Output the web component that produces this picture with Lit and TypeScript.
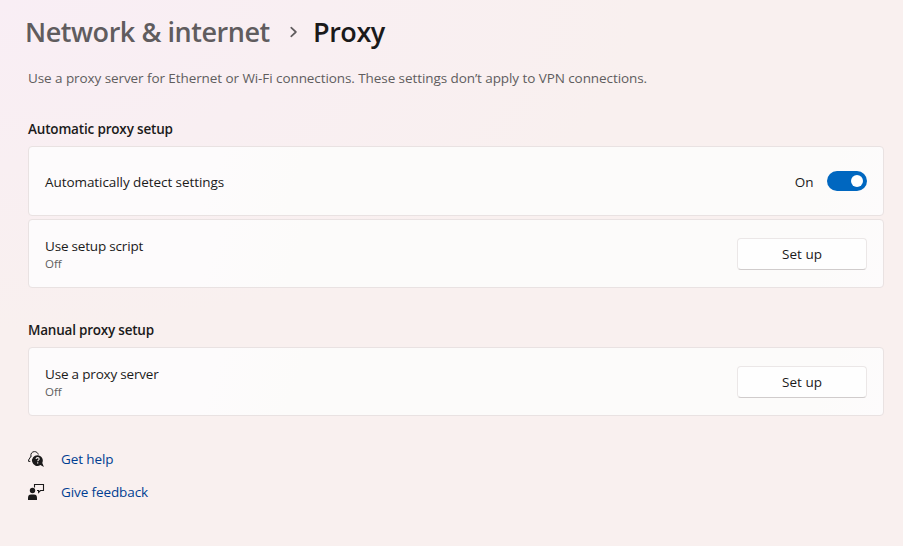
import { LitElement, html, css } from "lit";
import { customElement, property, state } from "lit/decorators.js";

const base = css`
  :host { display: block; box-sizing: border-box; font-family: "Open Sans", "Noto Sans", sans-serif; color: #1b1a1a; }
  * { box-sizing: border-box; margin: 0; }
`;

@customElement("toggle-switch")
class ToggleSwitch extends LitElement {
  static styles = [base, css`
    .wrap { display: flex; align-items: center; }
    .label { font-size: 13.5px; line-height: 20px; margin-right: 13.5px; padding-top: 2px; }
    .track { width: 40px; height: 20px; border-radius: 10px; border: 0; background: #0067c0; padding: 0 4px; display: flex; align-items: center; justify-content: flex-end; }
    .track.off { justify-content: flex-start; background: #8a8a8a; }
    .thumb { width: 12px; height: 12px; border-radius: 50%; background: #fff; }
  `];
  @state() on = true;
  render() {
    return html`<div class="wrap">
      <span class="label">${this.on ? "On" : "Off"}</span>
      <button class="track ${this.on ? "" : "off"}" @click=${() => (this.on = !this.on)}><span class="thumb"></span></button>
    </div>`;
  }
}

@customElement("setting-card")
class SettingCard extends LitElement {
  static styles = [base, css`
    .card { height: 69px; display: flex; align-items: center; justify-content: space-between; padding: 0 16px; border: 1px solid #e9e2e2; border-radius: 4px; background: linear-gradient(110deg, #fdfbfc 0%, #fdfbfc 22%, #fcfbfa 32%, #fcfbfa 92%, #fdfbfc 100%); }
    .card.tall { height: 70px; }
    .name { font-size: 13.5px; line-height: 20px; white-space: nowrap; padding-top: 1px; letter-spacing: -0.19px; }
    .tall .name { letter-spacing: -0.07px; }
    .note { font-size: 11.5px; line-height: 16px; color: #605e5e; letter-spacing: 0; font-variant-ligatures: none; }
  `];
  @property() name = "";
  @property() note = "";
  render() {
    return html`<div class="card ${this.note ? "" : "tall"}">
      <div>
        <div class="name">${this.name}</div>
        ${this.note ? html`<div class="note">${this.note}</div>` : ""}
      </div>
      <slot></slot>
    </div>`;
  }
}

@customElement("app-root")
class AppRoot extends LitElement {
  static styles = [base, css`
    :host { height: 546px; overflow: hidden; padding: 12px 19px 0 28px; background: radial-gradient(ellipse 640px 330px at 0 0, #f9eef5 0%, #f9eff2 50%, #f9f0ef 100%); }
    .crumbs { display: flex; align-items: center; height: 40px; margin-left: -3px; font-size: 27px; font-weight: 600; line-height: 40px; white-space: nowrap; letter-spacing: -0.45px; }
    .parent { color: #605c5e; width: 264px; }
    .chev { width: 9px; height: 12px; margin-right: 15px; }
    .intro { margin-top: 16px; height: 20px; font-size: 13.5px; line-height: 20px; color: #605d5e; white-space: nowrap; letter-spacing: -0.08px; }
    h2 { font-size: 13.5px; font-weight: 600; line-height: 20px; white-space: nowrap; letter-spacing: -0.17px; }
    .auto { margin: 31px 0 7px; }
    .manual { margin: 32px 0 7px; letter-spacing: -0.22px; }
    .cards { display: grid; gap: 3px; }
    .btn { width: 130px; height: 32px; border: 1px solid #ebe7e7; border-bottom-color: #d0cccc; border-radius: 4px; background: #fefefe; font: 13.5px/20px "Open Sans", "Noto Sans", sans-serif; color: #1b1a1a; padding: 0; }
    .links { display: grid; gap: 13px; margin-top: 33px; }
    .link { display: flex; align-items: center; height: 20px; font-size: 13.5px; line-height: 20px; color: #003e92; text-decoration: none; letter-spacing: -0.1px; }
    .icon { width: 16px; height: 16px; margin-right: 17px; overflow: visible; }
  `];
  render() {
    return html`
      <div class="crumbs">
        <span class="parent">Network &amp; internet</span>
        <svg class="chev" viewBox="0 0 9 12"><path d="M2.2 1.7 6.9 6l-4.7 4.3" fill="none" stroke="#605c5e" stroke-width="1.7" stroke-linecap="round" stroke-linejoin="round"/></svg>
        <span>Proxy</span>
      </div>
      <p class="intro">Use a proxy server for Ethernet or Wi-Fi connections. These settings don’t apply to VPN connections.</p>
      <h2 class="auto">Automatic proxy setup</h2>
      <div class="cards">
        <setting-card name="Automatically detect settings"><toggle-switch></toggle-switch></setting-card>
        <setting-card name="Use setup script" note="Off"><button class="btn">Set up</button></setting-card>
      </div>
      <h2 class="manual">Manual proxy setup</h2>
      <setting-card name="Use a proxy server" note="Off"><button class="btn">Set up</button></setting-card>
      <div class="links">
        <a class="link"><svg class="icon" viewBox="0 0 16 16">
          <path d="M3 5.6C2.3 2.6 4.1 .6 6.5 .6c1.8 0 3.2 1 3.8 2.9M3 5.2.6 9v1.4h1.7" fill="none" stroke="#1b1a1a" stroke-width="1"/>
          <path d="M9.5 4.2a5.4 5.4 0 1 0 2.9 9.9l3.5 1.8-1.6-4A5.4 5.4 0 0 0 9.5 4.2z" fill="#1b1a1a"/>
          <path d="M8.1 8.1c0-1 .7-1.5 1.5-1.5s1.6.5 1.6 1.4c0 1.1-1.5 1.1-1.5 2.3M9.7 11.3v1.2" fill="none" stroke="#f8f0ee" stroke-width="1.1"/>
        </svg><span>Get help</span></a>
        <a class="link"><svg class="icon" viewBox="0 0 16 16">
          <path d="M6.5 3.5v-3h9v6h-3l-1.9 1.9v-1.9H9" fill="none" stroke="#1b1a1a" stroke-width="1.1"/>
          <circle cx="4.5" cy="6.5" r="2.7" fill="#1b1a1a"/>
          <path d="M0 16v-2.2Q0 10.4 3 10.4h3q3 0 3 3.4V16z" fill="#1b1a1a"/>
        </svg><span>Give feedback</span></a>
      </div>`;
  }
}
